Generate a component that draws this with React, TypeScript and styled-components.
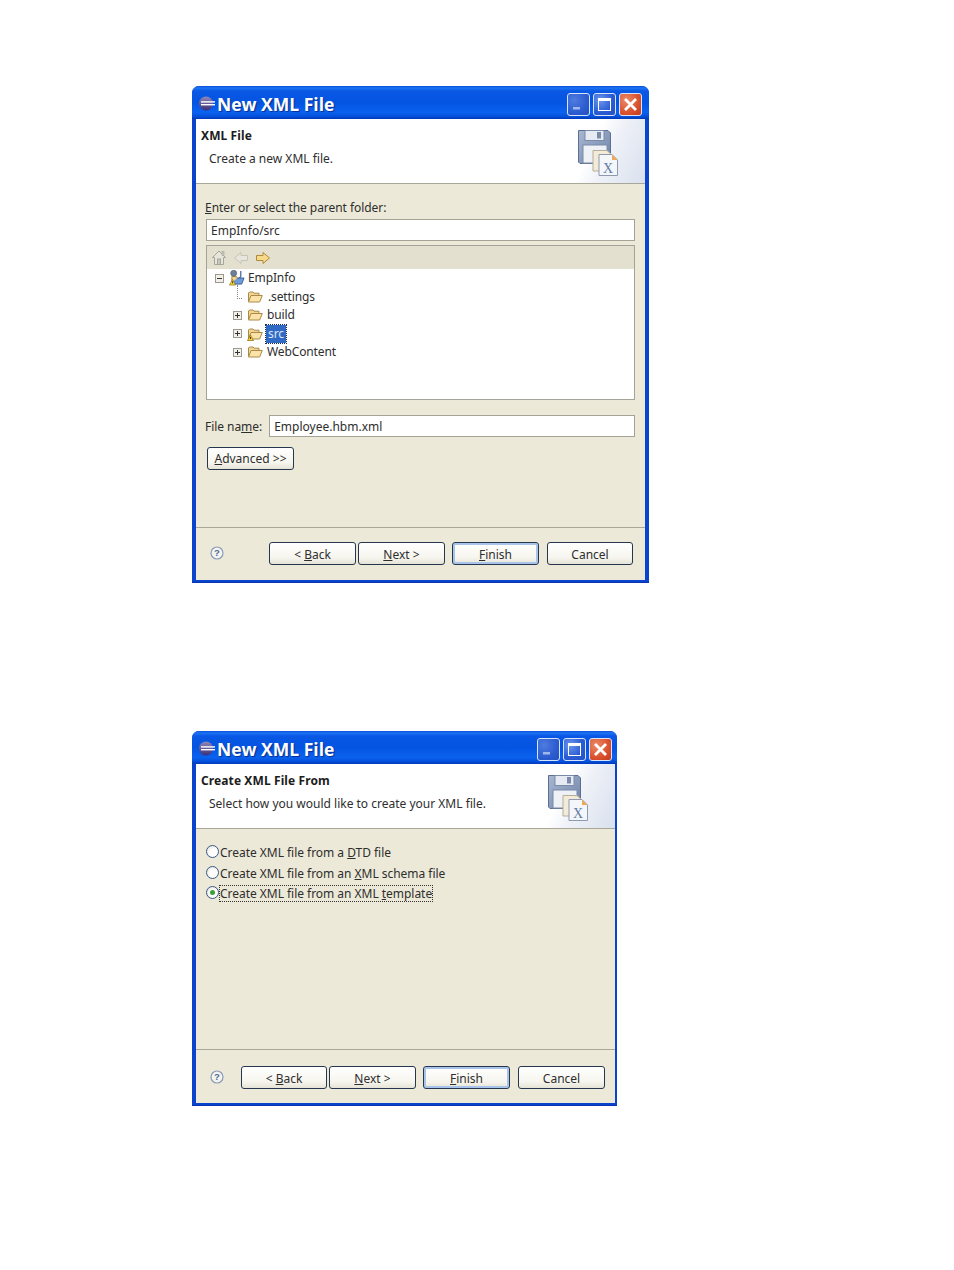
import React from "react";
import styled, { createGlobalStyle } from "styled-components";

const Global = createGlobalStyle`
  html, body { margin: 0; padding: 0; background: #fff; }
  body { font-family: "Noto Sans", "Liberation Sans", sans-serif; font-size: 12px; color: #2e2e2e; }
`;

const Page = styled.div`
  width: 954px;
  height: 1270px;
  box-sizing: border-box;
  padding: 86px 0 0 192px;
  display: flex;
  flex-direction: column;
  gap: 148px;
  align-items: flex-start;
`;

const Win = styled.section<{ $w: number; $h: number; $right: number }>`
  width: ${(p) => p.$w}px;
  height: ${(p) => p.$h}px;
  box-sizing: border-box;
  display: flex;
  flex-direction: column;
  border-radius: 7px 7px 0 0;
  background: #0a44cc;
  padding: 0 ${(p) => p.$right}px 3px 4px;
  box-shadow: inset 0 -1px 0 #0a35b0;
`;

const TitleBar = styled.header<{ $right: number }>`
  height: 33px;
  flex: none;
  margin: 0 -${(p) => p.$right}px 0 -4px;
  padding: 2px ${(p) => p.$right + 3}px 0 6px;
  box-sizing: border-box;
  display: flex;
  align-items: center;
  border-radius: 7px 7px 0 0;
  background: linear-gradient(180deg, #0a4fd8 0%, #1c74f5 6%, #0a58e4 15%, #0454e2 50%, #0a62ee 80%, #0450dc 92%, #0039b8 100%);
`;

const TitleText = styled.h1`
  margin: 1px 0 0 2px;
  font: bold 17.5px "Open Sans", "Liberation Sans", sans-serif;
  color: #fff;
  text-shadow: 1px 1px 1px #0a2c90;
  flex: 1;
  white-space: nowrap;
`;

const CtlGroup = styled.div`
  display: flex;
  gap: 3px;
  margin-top: 1px;
`;

const Ctl = styled.button<{ $kind: "min" | "max" | "close" }>`
  width: 23px;
  height: 23px;
  padding: 0;
  border: 1px solid #d8e4fa;
  border-radius: 3px;
  display: flex;
  align-items: center;
  justify-content: center;
  background: ${(p) =>
    p.$kind === "close"
      ? "radial-gradient(circle at 30% 30%, #ec8a68, #d9512e 60%, #c43a1e)"
      : p.$kind === "min"
      ? "radial-gradient(circle at 30% 30%, #4f7ce0, #2c5cd0 60%, #2450c0)"
      : "radial-gradient(circle at 30% 30%, #6a96ee, #2a5ad2 60%, #2450c4)"};
`;

const Banner = styled.div`
  height: 65px;
  flex: none;
  box-sizing: border-box;
  background: #fff;
  border-bottom: 1px solid #a8a798;
  display: flex;
  justify-content: space-between;
`;

const BannerText = styled.div`
  padding: 8px 0 0 5px;
`;

const BannerTitle = styled.h2`
  margin: 0;
  font: bold 12px/17px "Noto Sans", "Liberation Sans", sans-serif;
  letter-spacing: 0.1px;
  color: #1c1c1c;
`;

const BannerDesc = styled.p`
  margin: 6px 0 0 8px;
  font-size: 12px;
  line-height: 17px;
`;

const BannerArt = styled.div`
  width: 78px;
  height: 64px;
  background: linear-gradient(115deg, #fff 35%, #eef1f7 55%, #d9e0ee 100%);
  padding: 10px 0 0 10px;
  box-sizing: border-box;
`;

const Body = styled.div`
  flex: 1;
  min-height: 0;
  background: #ece9d8;
  display: flex;
  flex-direction: column;
  padding: 15px 10px 0 9px;
`;

const Label = styled.label`
  display: block;
  line-height: 17px;
  white-space: nowrap;
  letter-spacing: -0.05px;
`;

const TextBox = styled.div`
  height: 22px;
  box-sizing: border-box;
  background: #fff;
  border: 1px solid #a3a398;
  padding: 0 4px;
  line-height: 21px;
  flex: 1;
  white-space: nowrap;
`;

const FolderField = styled(TextBox)`
  flex: none;
  margin: 3px 0 4px 1px;
`;

const Tree = styled.div`
  height: 155px;
  flex: none;
  margin-left: 1px;
  box-sizing: border-box;
  border: 1px solid #a3a398;
  background: #fff;
`;

const TreeBar = styled.div`
  height: 23px;
  background: #e4e0cf;
  display: flex;
  align-items: center;
  gap: 6px;
  padding-left: 4px;
`;

const TreeList = styled.ul`
  list-style: none;
  margin: 0;
  padding: 0;
  letter-spacing: -0.12px;
`;

const TreeRow = styled.li<{ $level: number }>`
  height: 18.5px;
  display: flex;
  align-items: center;
  padding-left: ${(p) => (p.$level === 0 ? 8 : 26)}px;
`;

const RowIcon = styled.span`
  margin-left: 5px;
  display: flex;
`;

const RootIcon = styled(RowIcon)`
  margin-left: 5px;
`;

const RowLabel = styled.span<{ $selected?: boolean; $dot?: boolean }>`
  margin-left: ${(p) => (p.$dot ? 4 : 3)}px;
  padding: 0 ${(p) => (p.$selected ? 2 : 1)}px;
  line-height: 18px;
  ${(p) => (p.$selected ? "background:#316ac5;color:#dce6f7;outline:1px dotted #1a2a50;outline-offset:0;" : "")}
`;

const RootLabel = styled(RowLabel)`
  margin-left: 2px;
`;

const Connector = styled.span`
  width: 9px;
  height: 14px;
  box-sizing: border-box;
  margin-top: -10px;
  padding-left: 4px;
  &::before {
    content: "";
    display: block;
    width: 5px;
    height: 14px;
    box-sizing: border-box;
    border-left: 1px dotted #888;
    border-bottom: 1px dotted #888;
  }
`;

const FileRow = styled.div`
  display: flex;
  align-items: center;
  gap: 7px;
  margin-top: 15px;
`;

const Button = styled.button<{ $w?: number; $default?: boolean }>`
  width: ${(p) => p.$w ?? 87}px;
  height: 23px;
  flex: none;
  padding: 1px 0 0;
  font: inherit;
  color: inherit;
  border: 1px solid #26364f;
  border-radius: 3px;
  background: linear-gradient(180deg, #fff 0%, #f6f5ee 70%, #e6e3d6 100%);
  box-shadow: ${(p) => (p.$default ? "inset 0 0 0 2px #a9c4ea" : "none")};
  white-space: nowrap;
`;

const AdvancedButton = styled(Button)`
  margin: 10px 0 0 2px;
  padding: 0;
`;

const Footer = styled.footer<{ $h: number; $top: number; $right: number }>`
  height: ${(p) => p.$h}px;
  flex: none;
  margin: auto -10px 0 -9px;
  box-sizing: border-box;
  border-top: 1px solid #a8a798;
  background: #ece9d8;
  display: flex;
  padding: ${(p) => p.$top}px ${(p) => p.$right}px 0 14px;
  align-items: flex-start;
`;

const Spacer = styled.div`
  flex: 1;
`;

const Nav = styled.div`
  display: flex;
  gap: 2px;
`;

const Finishers = styled.div`
  display: flex;
  gap: 8px;
  margin-left: 7px;
`;

const HelpWrap = styled.span`
  display: flex;
  margin-top: 4px;
`;

const RadioList = styled.div`
  display: flex;
  flex-direction: column;
  gap: 3.5px;
  padding-left: 1px;
`;

const RadioRow = styled.div`
  display: flex;
  align-items: center;
  gap: 1px;
  height: 17px;
`;

const RadioDot = styled.span<{ $on?: boolean }>`
  width: 13px;
  height: 13px;
  margin-top: -2px;
  box-sizing: border-box;
  border-radius: 50%;
  border: 1px solid #3a5a8a;
  background: radial-gradient(circle at 60% 60%, #fff 40%, #d8d8cc 100%);
  display: flex;
  align-items: center;
  justify-content: center;
  &::after {
    content: "";
    width: 5px;
    height: 5px;
    border-radius: 50%;
    background: ${(p) => (p.$on ? "#3aa03a" : "transparent")};
  }
`;

const RadioText = styled.span<{ $focus?: boolean }>`
  white-space: nowrap;
  line-height: 15px;
  letter-spacing: -0.03px;
  ${(p) => (p.$focus ? "outline:1px dotted #333;" : "")}
`;

const Eclipse = () => (
  <svg width="17" height="17" viewBox="0 0 17 17">
    <defs>
      <linearGradient id="ecl" x1="0" y1="0" x2="0" y2="1">
        <stop offset="0" stopColor="#8f88b8" />
        <stop offset="1" stopColor="#3b2f78" />
      </linearGradient>
    </defs>
    <circle cx="8" cy="8.5" r="7" fill="url(#ecl)" />
    <rect x="3" y="6.2" width="14" height="1.4" fill="#fff" />
    <rect x="3" y="9" width="14" height="1.4" fill="#fff" />
  </svg>
);

const CtlGlyph = ({ kind }: { kind: "min" | "max" | "close" }) => (
  <svg width="15" height="15" viewBox="0 0 15 15">
    {kind === "min" && <rect x="2" y="10" width="7" height="2.5" fill="#9fb8ea" />}
    {kind === "max" && (
      <>
        <rect x="1.5" y="1.5" width="12" height="12" fill="none" stroke="#fff" strokeWidth="1" />
        <rect x="1.5" y="1.5" width="12" height="2.5" fill="#fff" />
      </>
    )}
    {kind === "close" && <path d="M2 2 L13 13 M13 2 L2 13" stroke="#fff" strokeWidth="2.8" />}
  </svg>
);

const FloppyArt = ({ id }: { id: string }) => (
  <svg width="44" height="48" viewBox="0 0 44 48">
    <defs>
      <linearGradient id={id} x1="0" y1="0" x2="1" y2="1">
        <stop offset="0" stopColor="#a9b8d2" />
        <stop offset="1" stopColor="#6c82a8" />
      </linearGradient>
    </defs>
    <path d="M1.5 1.5 H31 L33.5 4 V34.5 H3 L1.5 33 Z" fill={`url(#${id})`} stroke="#5c6f92" />
    <rect x="8" y="1.5" width="19" height="10" fill="#e6eaf2" stroke="#7a8aa8" />
    <rect x="20" y="3" width="4" height="6.5" fill="#7a8aa8" />
    <rect x="6" y="16" width="24" height="18" fill="#eef1f6" stroke="#7a8aa8" />
    <path d="M16 21.5 H30 L36 27 V42 H16 Z" fill="#f3ead8" stroke="#b5ae9b" />
    <path d="M22 25.5 H35 L40.5 31 V46.5 H22 Z" fill="#f4f6fa" stroke="#8e9ab0" />
    <path d="M35 25.5 L40.5 31 H35 Z" fill="#eda85a" />
    <text x="31" y="44" textAnchor="middle" fontFamily="'Liberation Serif', serif" fontSize="14" fill="#5f7ea6">
      X
    </text>
  </svg>
);

const Expander = ({ open }: { open?: boolean }) => (
  <svg width="9" height="9" viewBox="0 0 9 9">
    <rect x="0.5" y="0.5" width="8" height="8" fill="#f2f0e8" stroke="#9a9a90" />
    <rect x="2" y="4" width="5" height="1" fill="#333" />
    {!open && <rect x="4" y="2" width="1" height="5" fill="#333" />}
  </svg>
);

const Folder = ({ warn }: { warn?: boolean }) => (
  <svg width="16" height="14" viewBox="0 0 16 14">
    <path d="M1.5 11.5 V3 L2.5 2 H6 L7 3.2 H12 V5" fill="#f3d590" stroke="#a98a4a" />
    <path d="M1.5 12 L4 5.5 H15.3 L12.6 12 Z" fill="#fbe3a8" stroke="#a98a4a" />
    {warn && (
      <>
        <path d="M0.5 13.5 L3.5 8 L6.5 13.5 Z" fill="#f5d33c" stroke="#8a6a10" strokeWidth="0.7" />
        <rect x="3.1" y="10" width="0.9" height="2" fill="#3a2a00" />
      </>
    )}
  </svg>
);

const ProjectIcon = () => (
  <svg width="16" height="18" viewBox="0 0 17 18">
    <path d="M4 15.5 L6 9 H16 L13.5 15.5 Z" fill="#6d9bd8" stroke="#3c5f98" />
    <path d="M3 14 V7.5 H8 L9 9" fill="#f3d590" stroke="#a98a4a" />
    <circle cx="5" cy="4" r="3.2" fill="#6d8296" stroke="#44566a" strokeWidth="0.6" />
    <path d="M12.5 1.5 V7 Q12.5 9 10.5 8.4" fill="none" stroke="#4c6ea8" strokeWidth="1.4" />
    <path d="M0.5 16.5 L3.8 10.5 L7 16.5 Z" fill="#f5d33c" stroke="#8a6a10" strokeWidth="0.7" />
    <rect x="3.4" y="12.5" width="0.9" height="2.2" fill="#3a2a00" />
  </svg>
);

const HomeIcon = () => (
  <svg width="16" height="17" viewBox="0 0 16 17">
    <path d="M1.5 8.5 L8 2 L14.5 8.5 H12.5 V15.5 H3.5 V8.5 Z" fill="#e8e6dc" stroke="#a5a59a" />
    <rect x="6.5" y="10" width="3" height="5.5" fill="#c9c8bc" stroke="#a5a59a" />
    <rect x="11" y="2.5" width="2" height="4" fill="#c9c8bc" stroke="#a5a59a" strokeWidth="0.6" />
  </svg>
);

const ArrowIcon = ({ dir, on }: { dir: "left" | "right"; on?: boolean }) => (
  <svg width="16" height="14" viewBox="0 0 16 14">
    <path
      d={dir === "right" ? "M1.5 4.5 H8 V1.5 L14.5 7 L8 12.5 V9.5 H1.5 Z" : "M14.5 4.5 H8 V1.5 L1.5 7 L8 12.5 V9.5 H14.5 Z"}
      fill={on ? "#f7d98c" : "#e8e6dc"}
      stroke={on ? "#b08a38" : "#c5c4b8"}
    />
  </svg>
);

const Help = () => (
  <svg width="14" height="14" viewBox="0 0 14 14">
    <circle cx="7" cy="7" r="6" fill="#f4f4ee" stroke="#8a9ab8" strokeWidth="1.2" />
    <text x="7" y="10.4" textAnchor="middle" fontFamily="'Liberation Sans', sans-serif" fontWeight="bold" fontSize="9.5" fill="#4a6a9c">
      ?
    </text>
  </svg>
);

const TitleRow = ({ right }: { right: number }) => (
  <TitleBar $right={right}>
    <Eclipse />
    <TitleText>New XML File</TitleText>
    <CtlGroup>
      {(["min", "max", "close"] as const).map((k) => (
        <Ctl key={k} $kind={k} aria-label={k}>
          <CtlGlyph kind={k} />
        </Ctl>
      ))}
    </CtlGroup>
  </TitleBar>
);

const Head = ({ title, desc, id }: { title: string; desc: string; id: string }) => (
  <Banner>
    <BannerText>
      <BannerTitle>{title}</BannerTitle>
      <BannerDesc>{desc}</BannerDesc>
    </BannerText>
    <BannerArt>
      <FloppyArt id={id} />
    </BannerArt>
  </Banner>
);

const Actions = ({ h, top, right, cancelW, backW }: { h: number; top: number; right: number; cancelW: number; backW: number }) => (
  <Footer $h={h} $top={top} $right={right}>
    <HelpWrap>
      <Help />
    </HelpWrap>
    <Spacer />
    <Nav>
      <Button $w={backW}>
        {"< "}
        <u>B</u>ack
      </Button>
      <Button>
        <u>N</u>ext {">"}
      </Button>
    </Nav>
    <Finishers>
      <Button $default>
        <u>F</u>inish
      </Button>
      <Button $w={cancelW}>Cancel</Button>
    </Finishers>
  </Footer>
);

export default function App() {
  return (
    <Page>
      <Global />
      <Win $w={457} $h={497} $right={4}>
        <TitleRow right={4} />
        <Head title="XML File" desc="Create a new XML file." id="fa" />
        <Body>
          <Label>
            <u>E</u>nter or select the parent folder:
          </Label>
          <FolderField>EmpInfo/src</FolderField>
          <Tree>
            <TreeBar>
              <HomeIcon />
              <ArrowIcon dir="left" />
              <ArrowIcon dir="right" on />
            </TreeBar>
            <TreeList>
              <TreeRow $level={0}>
                <Expander open />
                <RootIcon>
                  <ProjectIcon />
                </RootIcon>
                <RootLabel>EmpInfo</RootLabel>
              </TreeRow>
              <TreeRow $level={1}>
                <Connector />
                <RowIcon>
                  <Folder />
                </RowIcon>
                <RowLabel $dot>.settings</RowLabel>
              </TreeRow>
              <TreeRow $level={1}>
                <Expander />
                <RowIcon>
                  <Folder />
                </RowIcon>
                <RowLabel>build</RowLabel>
              </TreeRow>
              <TreeRow $level={1}>
                <Expander />
                <RowIcon>
                  <Folder warn />
                </RowIcon>
                <RowLabel $selected>src</RowLabel>
              </TreeRow>
              <TreeRow $level={1}>
                <Expander />
                <RowIcon>
                  <Folder />
                </RowIcon>
                <RowLabel>WebContent</RowLabel>
              </TreeRow>
            </TreeList>
          </Tree>
          <FileRow>
            <Label>
              File na<u>m</u>e:
            </Label>
            <TextBox>Employee.hbm.xml</TextBox>
          </FileRow>
          <AdvancedButton $w={87}>
            <u>A</u>dvanced {">>"}
          </AdvancedButton>
          <Actions h={53} top={14} right={12} cancelW={86} backW={87} />
        </Body>
      </Win>
      <Win $w={425} $h={375} $right={2}>
        <TitleRow right={2} />
        <Head title="Create XML File From" desc="Select how you would like to create your XML file." id="fb" />
        <Body>
          <RadioList>
            <RadioRow>
              <RadioDot />
              <RadioText>
                Create XML file from a <u>D</u>TD file
              </RadioText>
            </RadioRow>
            <RadioRow>
              <RadioDot />
              <RadioText>
                Create XML file from an <u>X</u>ML schema file
              </RadioText>
            </RadioRow>
            <RadioRow>
              <RadioDot $on />
              <RadioText $focus>
                Create XML file from an XML <u>t</u>emplate
              </RadioText>
            </RadioRow>
          </RadioList>
          <Actions h={54} top={16} right={10} cancelW={87} backW={86} />
        </Body>
      </Win>
    </Page>
  );
}
